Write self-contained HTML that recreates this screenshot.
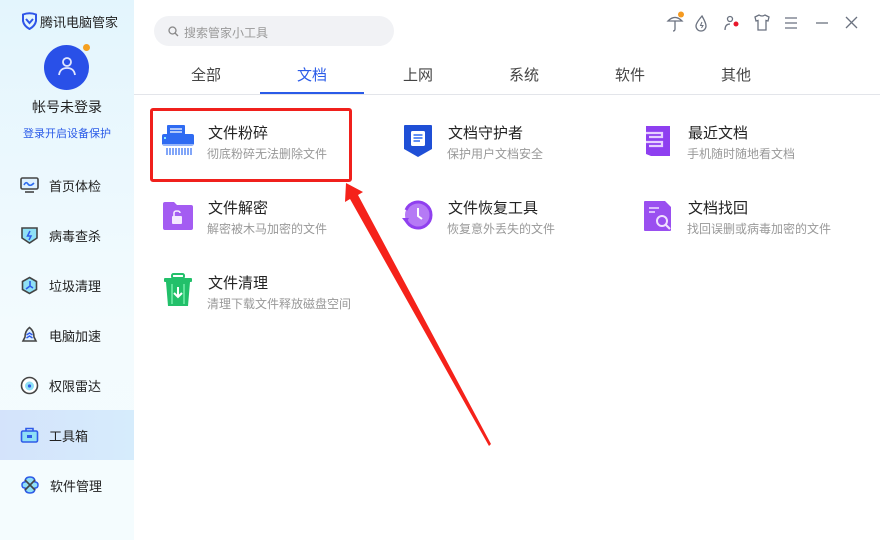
<!DOCTYPE html>
<html><head><meta charset="utf-8"><style>
*{margin:0;padding:0;box-sizing:border-box}
body{width:880px;height:540px;overflow:hidden;background:#fff;font-family:"Liberation Sans","Noto Sans CJK SC",sans-serif;position:relative}
.side{position:absolute;left:0;top:0;width:134px;height:540px;background:linear-gradient(180deg,#e3f5fd 0%,#f3fbfe 60%,#f4fcfe 100%)}
.abs{position:absolute}
.nav{position:absolute;left:0;width:134px;height:50px;display:flex;align-items:center;font-size:13px;color:#222}
.nav svg{margin-left:20px;margin-right:10px}
.tab{position:absolute;top:64px;width:106px;text-align:center;font-size:15px;color:#444}
.t{position:absolute;font-size:15px;color:#222}
.s{position:absolute;font-size:12px;color:#999}
</style></head><body>
<div class="side">
 <svg class="abs" style="left:21px;top:12px" width="17" height="18" viewBox="0 0 17 18"><path d="M2 2.5Q8.5 0 15 2.5L15 9Q14 14 8.5 17Q3 14 2 9Z" fill="none" stroke="#2f55e8" stroke-width="2"/><path d="M5 7L8.5 11L12 7" fill="none" stroke="#2f55e8" stroke-width="2"/></svg>
 <div class="abs" style="left:40px;top:12px;font-size:13px;color:#222">腾讯电脑管家</div>
 <div class="abs" style="left:44px;top:45px;width:45px;height:45px;border-radius:50%;background:#2950e8"></div>
 <div class="abs" style="left:83px;top:44px;width:7px;height:7px;border-radius:50%;background:#f5a020"></div>
 <svg class="abs" style="left:56px;top:55px" width="22" height="24" viewBox="0 0 22 24"><circle cx="11" cy="7" r="4" fill="none" stroke="#dfe6ff" stroke-width="1.8"/><path d="M3 20Q4 13 11 13Q18 13 19 20" fill="none" stroke="#dfe6ff" stroke-width="1.8"/></svg>
 <div class="abs" style="left:0;width:134px;top:97px;text-align:center;font-size:14px;color:#222">帐号未登录</div>
 <div class="abs" style="left:0;width:134px;top:125px;text-align:center;font-size:11px;color:#2a5be8">登录开启设备保护</div>
 <div class="nav" style="top:160px"><svg width="19" height="18" viewBox="0 0 19 18"><rect x="1" y="2" width="17" height="11" rx="1.5" fill="#dff1ff" stroke="#444" stroke-width="1.6"/><path d="M4 9Q6 5 8 8T14 7" fill="none" stroke="#2e6cf0" stroke-width="1.6"/><path d="M5 16H14" stroke="#444" stroke-width="1.6"/></svg>首页体检</div>
 <div class="nav" style="top:210px"><svg width="19" height="19" viewBox="0 0 19 19"><path d="M2 2H17V12L9.5 17L2 12Z" fill="#8fe0f5" stroke="#444" stroke-width="1.6"/><path d="M10 5L7.5 10H11L9 14" fill="none" stroke="#2e5be8" stroke-width="1.5"/></svg>病毒查杀</div>
 <div class="nav" style="top:260px"><svg width="19" height="19" viewBox="0 0 19 19"><path d="M9.5 1.5L16.5 5.5V13.5L9.5 17.5L2.5 13.5V5.5Z" fill="#8fe0f5" stroke="#444" stroke-width="1.6"/><path d="M10 5V10L6 13M10 10L13 12" fill="none" stroke="#2e5be8" stroke-width="1.6"/></svg>垃圾清理</div>
 <div class="nav" style="top:310px"><svg width="19" height="19" viewBox="0 0 19 19"><path d="M9.5 1.5Q14 5 14 11L16 15H3L5 11Q5 5 9.5 1.5Z" fill="#dff1ff" stroke="#444" stroke-width="1.6"/><path d="M6.5 9L9.5 7L12.5 9M6.5 12L9.5 10L12.5 12" fill="none" stroke="#2e5be8" stroke-width="1.4"/></svg>电脑加速</div>
 <div class="nav" style="top:360px"><svg width="19" height="19" viewBox="0 0 19 19"><circle cx="9.5" cy="9.5" r="8" fill="#fff" stroke="#444" stroke-width="1.6"/><circle cx="9.5" cy="10" r="4.5" fill="#8fe0f5"/><circle cx="9.5" cy="10" r="1.6" fill="#2e5be8"/></svg>权限雷达</div>
 <div class="nav" style="top:410px;background:linear-gradient(90deg,#d4e3fb,#d6ecfc)"><svg width="19" height="17" viewBox="0 0 19 17"><rect x="1.5" y="4" width="16" height="11" rx="1.5" fill="#8fe0f5" stroke="#2e5be8" stroke-width="1.6"/><path d="M6 4V1.5H13V4" fill="none" stroke="#2e5be8" stroke-width="1.6"/><rect x="7" y="8" width="5" height="3" fill="#2e5be8"/></svg>工具箱</div>
 <div class="nav" style="top:460px"><svg width="20" height="20" viewBox="0 0 20 20"><path d="M10 2Q15 2 15 7Q18 7 18 10Q18 13 15 13Q15 18 10 18Q5 18 5 13Q2 13 2 10Q2 7 5 7Q5 2 10 2Z" fill="#8fe0f5" stroke="#2e5be8" stroke-width="1.5"/><path d="M5 5L15 15M15 5L5 15" stroke="#444" stroke-width="1.6"/></svg>软件管理</div>
</div>

<div class="abs" style="left:154px;top:16px;width:240px;height:30px;border-radius:15px;background:#f1f2f5"></div>
<svg class="abs" style="left:168px;top:26px" width="11" height="11" viewBox="0 0 11 11"><circle cx="4.5" cy="4.5" r="3.5" fill="none" stroke="#888" stroke-width="1.3"/><path d="M7 7L10 10" stroke="#888" stroke-width="1.3"/></svg>
<div class="abs" style="left:184px;top:24px;font-size:12px;color:#999">搜索管家小工具</div>

<svg class="abs" style="left:660px;top:10px" width="210" height="26" viewBox="0 0 210 26">
 <g fill="none" stroke="#6b7280" stroke-width="1.3">
 <path d="M8 11Q15 4 22 11Z"/><path d="M15 11V19Q15 21 13 21"/>
 <path d="M42 6Q36 13 36 16A5 5 0 0 0 46 16Q46 13 42 6Z"/><path d="M42 12L40.5 15.5H43L41.5 18" stroke-width="1"/>
 <circle cx="70" cy="9" r="2.5"/><path d="M65 20Q65 14 70 14"/>
 <path d="M95 7L99 5Q102 7 105 5L109 7L108 11L106 10.5V20H98V10.5L96 11Z"/>
 <path d="M125 8H137M125 13H137M125 18H137"/>
 <path d="M156 13H168"/>
 <path d="M186 7L197 18M197 7L186 18"/>
 </g>
 <circle cx="21" cy="4.5" r="3" fill="#f59a20"/><circle cx="76" cy="14" r="2.5" fill="#e8172b"/>
</svg>

<div class="tab" style="left:153px">全部</div>
<div class="tab" style="left:259px;color:#2a5be8">文档</div>
<div class="tab" style="left:365px">上网</div>
<div class="tab" style="left:471px">系统</div>
<div class="tab" style="left:577px">软件</div>
<div class="tab" style="left:683px">其他</div>
<div class="abs" style="left:134px;top:94px;width:746px;height:1px;background:#e3e5ea"></div>
<div class="abs" style="left:260px;top:92px;width:104px;height:2px;background:#2a5be8"></div>

<!-- icons -->
<svg class="abs" style="left:161px;top:124px" width="34" height="34" viewBox="0 0 34 34"><rect x="6" y="1" width="18" height="12" rx="1" fill="#2f6bf2"/><path d="M9 5H21M9 8H21" stroke="#fff" stroke-width="1.3"/><rect x="1" y="10" width="32" height="12" rx="2" fill="#2f6bf2"/><path d="M1 21H33" stroke="#fff" stroke-width="1"/><rect x="3" y="13" width="2" height="2" fill="#8ef"/><path d="M6 24V31M9 24V31M12 24V31M15 24V31M18 24V31M21 24V31M24 24V31M27 24V31M30 24V31" stroke="#2f6bf2" stroke-width="1.2"/></svg>
<svg class="abs" style="left:403px;top:124px" width="30" height="34" viewBox="0 0 30 34"><path d="M1 2Q1 1 2 1H28Q29 1 29 2V25L15 33L1 25Z" fill="#1f4fd6"/><rect x="8" y="7" width="14" height="15" rx="1.5" fill="#fff"/><path d="M10.5 11H19.5M10.5 14H19.5M10.5 17H17" stroke="#2f6bf2" stroke-width="1.4"/></svg>
<svg class="abs" style="left:645px;top:125px" width="26" height="32" viewBox="0 0 26 32"><path d="M1 1H25V31H6L1 29Z" fill="#8e3ff0"/><path d="M1 8H17V12H4M1 17H17V21H4" fill="none" stroke="#e6d0ff" stroke-width="2.2"/></svg>
<svg class="abs" style="left:162px;top:201px" width="32" height="30" viewBox="0 0 32 30"><path d="M1 3Q1 1 3 1H12L15 4H29Q31 4 31 6V27Q31 29 29 29H3Q1 29 1 27Z" fill="#a45cf2"/><rect x="10" y="15" width="10" height="8" rx="1" fill="#f4e8ff"/><path d="M12 15V12Q12 10 15 10Q18 10 18 12" fill="none" stroke="#f4e8ff" stroke-width="1.6"/></svg>
<svg class="abs" style="left:400px;top:200px" width="34" height="32" viewBox="0 0 34 32"><circle cx="18" cy="15" r="13" fill="#b57af5"/><path d="M6 20A13 13 0 1 0 6 10" fill="none" stroke="#9040ef" stroke-width="3"/><path d="M2 18L6 23L9 18" fill="#9040ef"/><path d="M18 8V16L22 19" fill="none" stroke="#fff" stroke-width="2"/></svg>
<svg class="abs" style="left:643px;top:200px" width="30" height="32" viewBox="0 0 30 32"><path d="M1 2Q1 1 2 1H22L28 7V30Q28 31 27 31H2Q1 31 1 30Z" fill="#9a4ff0"/><path d="M6 8H16M6 12H12" stroke="#f0e0ff" stroke-width="1.6"/><circle cx="19" cy="21" r="5" fill="none" stroke="#f0e0ff" stroke-width="2"/><path d="M22.5 24.5L27 29" stroke="#f0e0ff" stroke-width="2.2"/></svg>
<svg class="abs" style="left:163px;top:273px" width="30" height="34" viewBox="0 0 30 34"><rect x="9" y="1" width="12" height="4" rx="1.5" fill="none" stroke="#22c06a" stroke-width="2"/><rect x="1" y="5" width="28" height="4" rx="1" fill="#22c06a"/><path d="M3 9H27L25 33H5Z" fill="#22c06a"/><path d="M9 11V31M21 11V31" stroke="#5fe39a" stroke-width="2"/><path d="M15 14V24M11 20L15 24L19 20" fill="none" stroke="#fff" stroke-width="2"/></svg>

<div class="t" style="left:208px;top:122px">文件粉碎</div><div class="s" style="left:207px;top:145px">彻底粉碎无法删除文件</div>
<div class="t" style="left:448px;top:122px">文档守护者</div><div class="s" style="left:447px;top:145px">保护用户文档安全</div>
<div class="t" style="left:688px;top:122px">最近文档</div><div class="s" style="left:687px;top:145px">手机随时随地看文档</div>
<div class="t" style="left:208px;top:197px">文件解密</div><div class="s" style="left:207px;top:220px">解密被木马加密的文件</div>
<div class="t" style="left:448px;top:197px">文件恢复工具</div><div class="s" style="left:447px;top:220px">恢复意外丢失的文件</div>
<div class="t" style="left:688px;top:197px">文档找回</div><div class="s" style="left:687px;top:220px">找回误删或病毒加密的文件</div>
<div class="t" style="left:208px;top:272px">文件清理</div><div class="s" style="left:207px;top:295px">清理下载文件释放磁盘空间</div>

<div class="abs" style="left:150px;top:108px;width:202px;height:74px;border:3px solid #f0201c;border-radius:3px"></div>
<svg class="abs" style="left:0;top:0" width="880" height="540" viewBox="0 0 880 540"><polygon points="346,183 345,202 350,199 489,446 491,444 358,195 363,192" fill="#f5221a"/></svg>
</body></html>
